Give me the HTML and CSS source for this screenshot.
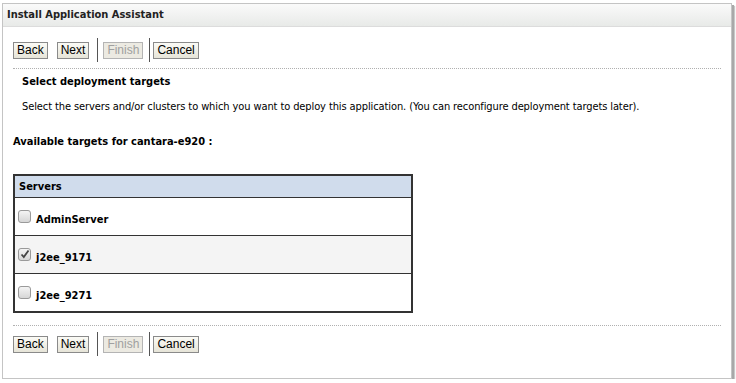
FILE: index.html
```html
<!DOCTYPE html>
<html lang="en">
<head>
    <meta charset="UTF-8">
    <meta name="viewport" content="width=device-width, initial-scale=1.0">
    <title>Install Application Assistant</title>
    <link rel="stylesheet" href="styles.css">
</head>
<body>
    <div class="panel">
        <div class="panel-header">Install Application Assistant</div>
        <div class="panel-body">
            <div class="button-bar">
                <button class="btn back">Back</button>
                <button class="btn next">Next</button>
                <span class="sep"></span>
                <button class="btn finish" disabled>Finish</button>
                <span class="sep last"></span>
                <button class="btn">Cancel</button>
            </div>
            <div class="dotted"></div>
            <div class="intro">
                <h3>Select deployment targets</h3>
                <p>Select the servers and/or clusters to which you want to deploy this application. (You can reconfigure deployment targets later).</p>
            </div>
            <div class="targets-title">Available targets for cantara-e920 :</div>
            <table class="servers">
                <tr><th>Servers</th></tr>
                <tr><td><span class="check"></span>AdminServer</td></tr>
                <tr class="alt"><td><span class="check checked"><svg viewBox="0 0 12 12" width="12" height="12"><path d="M2.5 6.5 L4.8 9 L9.5 2.5" fill="none" stroke="#444" stroke-width="1.8"/></svg></span>j2ee_9171</td></tr>
                <tr><td><span class="check"></span>j2ee_9271</td></tr>
            </table>
            <div class="dotted bottom"></div>
            <div class="button-bar">
                <button class="btn back">Back</button>
                <button class="btn next">Next</button>
                <span class="sep"></span>
                <button class="btn finish" disabled>Finish</button>
                <span class="sep last"></span>
                <button class="btn">Cancel</button>
            </div>
        </div>
    </div>
</body>
</html>
```

FILE: styles.css
```css
body {
    margin: 0;
    padding: 0;
    background: #fff;
    font-family: "DejaVu Sans Condensed", "DejaVu Sans", sans-serif;
    font-size: 11px;
    color: #000;
}
.panel {
    margin: 3px 4px 0 2px;
    height: 374px;
    border: 1px solid #c4c4c4;
    box-shadow: 2px 2px 0 #a8a8a8, 3px 3px 1px #c8c8c8;
    background: #fff;
}
.panel-header {
    height: 22px;
    line-height: 22px;
    padding-left: 4px;
    font-weight: bold;
    font-size: 11px;
    color: #222;
    background: linear-gradient(#fafafa, #e8eae8);
    border-bottom: 1px solid #dcdcdc;
}
.panel-body {
    padding: 11px 10px 0 10px;
}
.button-bar {
    display: flex;
    align-items: center;
    height: 24px;
}
.btn {
    font-family: "Liberation Sans", Arial, sans-serif;
    font-size: 12px;
    height: 17px;
    padding: 0 3px;
    line-height: 15px;
    border: 1px solid #8a8a8a;
    border-radius: 0;
    background: linear-gradient(#fbfbf6, #e6e4d8);
    color: #000;
}
.btn.back {
    margin-right: 9px;
}
.btn.next {
    margin-right: 8px;
}
.btn.finish {
    margin-right: 6px;
}
.btn:disabled {
    color: #a0a0a0;
    border-color: #b4b4b4;
    background: #eceae2;
}
.sep {
    width: 1px;
    height: 24px;
    margin-right: 5px;
    background: #555;
}
.sep.last {
    margin-right: 3px;
}
.dotted {
    border-top: 1px dotted #b0b0b0;
    margin: 6px 0 0 0;
}
.dotted.bottom {
    margin: 12px 0 6px 0;
}
.intro {
    padding-left: 9px;
}
.intro h3 {
    margin: 6px 0 0;
    font-size: 11px;
    line-height: 14px;
}
.intro p {
    margin: 11px 0 0;
    line-height: 14px;
    letter-spacing: -0.1px;
}
.targets-title {
    margin-top: 21px;
    font-weight: bold;
    line-height: 14px;
}
.servers {
    margin-top: 25px;
    width: 400px;
    border-collapse: collapse;
    border: 2px solid #333;
}
.servers th {
    text-align: left;
    background: #d0dcec;
    height: 21px;
    padding: 0 4px;
    border-bottom: 1px solid #333;
}
.servers td {
    height: 34px;
    padding: 3px 3px 0;
    border-top: 1px solid #333;
    font-weight: bold;
}
.servers .alt td {
    background: #f4f4f4;
}
.check {
    display: inline-block;
    vertical-align: 0;
    width: 11px;
    height: 11px;
    margin-right: 5px;
    border: 1px solid #9a9a9a;
    border-radius: 3px;
    background: linear-gradient(#f4f4f4, #d6d6d6);
    position: relative;
}
.check svg {
    position: absolute;
    left: 0;
    top: -1px;
}
```
